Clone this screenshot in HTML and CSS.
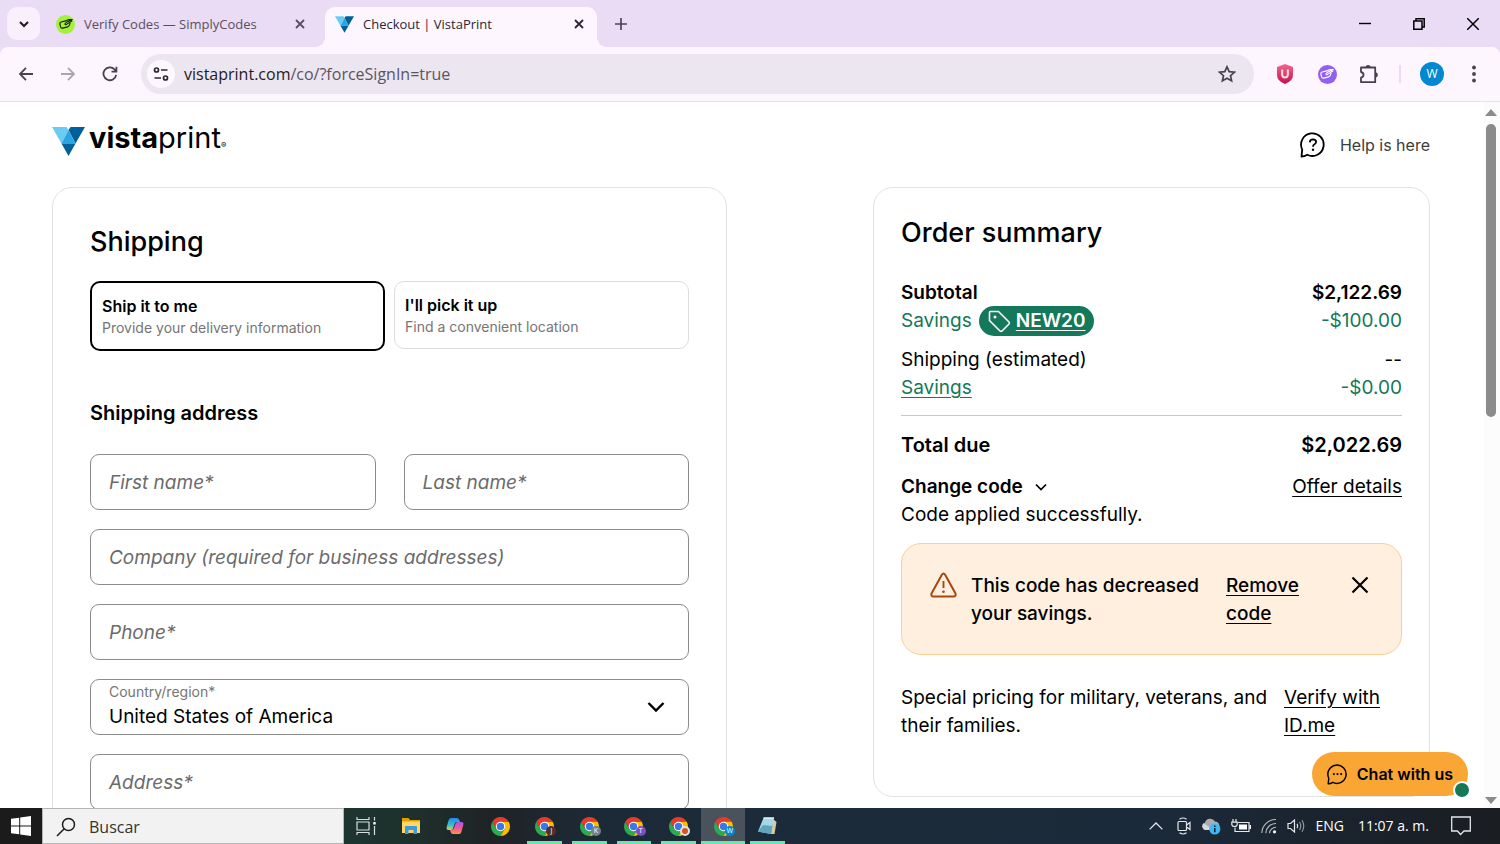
FILE: index.html
```html
<!DOCTYPE html>
<html lang="en">
<head>
    <meta charset="UTF-8">
    <meta name="viewport" content="width=device-width, initial-scale=1.0">
    <title>Checkout | VistaPrint</title>
    <link rel="stylesheet" href="styles.css">
</head>
<body>
    <!-- shared shapes -->
    <svg class="defs" aria-hidden="true">
        <symbol id="vp" viewBox="0 0 33 29">
            <path fill="#6ccbf3" d="M0 0H14.5L16.5 3L9.5 16.5Z"/>
            <path fill="#00619a" d="M18.5 0H33L23.5 16.5L16.5 3Z"/>
            <path fill="#2ba4e0" d="M16.5 3L23.5 16.5H9.5Z"/>
            <path fill="#006198" d="M9.5 16.5H23.5L16.5 29Z"/>
        </symbol>
        <symbol id="chrome" viewBox="2 2 20 20">
            <path fill="#e33b2e" d="M3.34 7A10 10 0 0 1 20.66 7H12L7.67 14.5Z"/>
            <path fill="#2da94f" d="M3.34 7L7.67 14.5L16.33 14.5L12 22A10 10 0 0 1 3.34 7Z"/>
            <path fill="#fdbd00" d="M20.66 7A10 10 0 0 1 12 22L16.33 14.5L12 7Z"/>
            <circle cx="12" cy="12" r="5" fill="#fff"/>
            <circle cx="12" cy="12" r="3.9" fill="#3b78e7"/>
        </symbol>
        <symbol id="hand" viewBox="0 0 14 14">
            <path fill="none" stroke="currentColor" stroke-width="1.1" stroke-linejoin="round" stroke-linecap="round" d="M6.800 3.900L2 5Q.6 5.400 .9 7L1.600 9.900Q2 11.400 3.600 11.100L8.600 9.900Q10 9.500 10.400 8.200L11 6.300M13.200 2.600L8 5.100Q5.300 6.700 6.200 7.600Q7 8.200 8.300 6.900L12.800 4M7.200 3.700L9.800 2.500L13.200 2.600"/>
        </symbol>
        <symbol id="bubble" viewBox="0 0 26 26">
            <path fill="none" stroke="currentColor" stroke-width="1.800" stroke-linejoin="round" d="M1.500 24.500L2.200 17.600A11.300 11.300 0 1 1 7.200 22.700Q4.500 24.400 1.500 24.500Z"/>
        </symbol>
    </svg>

    <div class="tabstrip">
        <button class="tab-search" aria-label="Search tabs">
            <svg width="12" height="12" viewBox="0 0 12 12"><path d="M2 4L6 8L10 4" fill="none" stroke="#1d1b20" stroke-width="2"/></svg>
        </button>
        <div class="tab">
            <span class="fav"><svg width="14" height="14"><use href="#hand"/></svg></span>
            <span class="tab-title">Verify Codes — SimplyCodes</span>
            <button class="tab-close" aria-label="Close tab"><svg width="10" height="10" viewBox="0 0 10 10"><path d="M1 1L9 9M9 1L1 9" stroke="currentColor" stroke-width="1.8"/></svg></button>
        </div>
        <div class="tab active">
            <svg width="19" height="17"><use href="#vp"/></svg>
            <span class="tab-title">Checkout | VistaPrint</span>
            <button class="tab-close" aria-label="Close tab"><svg width="10" height="10" viewBox="0 0 10 10"><path d="M1 1L9 9M9 1L1 9" stroke="currentColor" stroke-width="1.8"/></svg></button>
        </div>
        <button class="new-tab" aria-label="New tab"><svg width="12" height="12" viewBox="0 0 12 12"><path d="M6 0V12M0 6H12" stroke="#4e4158" stroke-width="1.700"/></svg></button>
        <div class="window-buttons">
            <button aria-label="Minimize"><svg width="12" height="12" viewBox="0 0 12 12"><path d="M0 5.500H12" stroke="#000" stroke-width="1.400"/></svg></button>
            <button aria-label="Restore"><svg width="12" height="12" viewBox="0 0 12 12"><path d="M.8 3H9V11.200H.8ZM3 3V.8H11.200V9H9" fill="none" stroke="#000" stroke-width="1.500"/></svg></button>
            <button aria-label="Close"><svg width="12" height="12" viewBox="0 0 12 12"><path d="M0 0L12 12M12 0L0 12" stroke="#000" stroke-width="1.500"/></svg></button>
        </div>
    </div>

    <div class="toolbar-wrap">
    <div class="toolbar">
        <button class="tool" aria-label="Back"><svg width="14" height="14" viewBox="0 0 14 14"><path d="M14 7H1M7 .8L.9 7L7 13.200" fill="none" stroke="#47424b" stroke-width="1.800"/></svg></button>
        <button class="tool" aria-label="Forward"><svg width="14" height="14" viewBox="0 0 14 14"><path d="M0 7H13M7 .8L13.100 7L7 13.200" fill="none" stroke="#aaa4ae" stroke-width="1.800"/></svg></button>
        <button class="tool" aria-label="Reload"><svg width="16" height="16" viewBox="0 0 16 16"><path d="M14.200 8.900A6.400 6.400 0 1 1 12.700 3.600L14.400 5.300M14.400 .8V5.700H9.500" fill="none" stroke="#47424b" stroke-width="1.800"/></svg></button>
        <div class="omnibox">
            <button class="site-info" aria-label="View site information"><svg width="16" height="14" viewBox="0 0 16 14"><g fill="none" stroke="#2c2830" stroke-width="1.700"><circle cx="3.500" cy="3" r="2"/><circle cx="12.500" cy="11" r="2"/><path d="M8 3H14.500M1.500 11H8"/></g></svg></button>
            <div class="url">vistaprint.com<span>/co/?forceSignIn=true</span></div>
            <button class="star" aria-label="Bookmark this tab"><svg width="18" height="18" viewBox="0 0 18 18"><path d="M9 1.800L11.200 6.600L16.500 7.200L12.500 10.700L13.600 15.900L9 13.200L4.400 15.900L5.500 10.700L1.500 7.200L6.800 6.600Z" fill="none" stroke="#47424b" stroke-width="1.700"/></svg></button>
        </div>
        <button class="tool" aria-label="Shield"><svg width="16" height="20" viewBox="0 0 16 20"><defs><linearGradient id="sh" x2="0" y2="1"><stop stop-color="#f5688a"/><stop offset="1" stop-color="#c40f4c"/></linearGradient></defs><path fill="url(#sh)" d="M8 0L16 3V11Q16 17 8 20Q0 17 0 11V3Z"/><path d="M5.200 5.500V10.500Q5.200 13.400 8 13.400Q10.800 13.400 10.800 10.500V5.500" fill="none" stroke="#fbe3ea" stroke-width="2"/></svg></button>
        <button class="tool" aria-label="SimplyCodes"><span class="fav purple"><svg width="14" height="14"><use href="#hand"/></svg></span></button>
        <button class="tool" aria-label="Extensions"><svg width="20" height="20" viewBox="0 0 20 20"><path d="M2 3.500H16.200V18.200H2V13.700Q4.500 13.200 4.500 10.800Q4.500 8.500 2 8Z" fill="none" stroke="#47424b" stroke-width="1.800" stroke-linejoin="round"/><path fill="#47424b" d="M6.500 3.500A2.600 2.600 0 0 1 11.700 3.500ZM16.200 8.200A2.600 2.600 0 0 1 16.200 13.400Z"/></svg></button>
        <span class="divider"></span>
        <button class="tool" aria-label="Profile"><span class="avatar">W</span></button>
        <button class="tool" aria-label="Menu"><svg width="4" height="18" viewBox="0 0 4 18"><g fill="#47424b"><circle cx="2" cy="2.500" r="1.900"/><circle cx="2" cy="9" r="1.900"/><circle cx="2" cy="15.500" r="1.900"/></g></svg></button>
    </div>
    </div>

    <div class="viewport">
        <div class="page">
            <header class="site-header">
                <a class="logo" href="#" aria-label="vistaprint home">
                    <svg width="33" height="29"><use href="#vp"/></svg>
                    <span class="wordmark"><b>vista</b>print<small>®</small></span>
                </a>
                <a class="help" href="#">
                    <span class="help-icon">
                        <svg width="26" height="26" viewBox="0 0 26 26"><use href="#bubble"/><path d="M9.800 10.400Q9.900 7.300 13 7.300Q16.100 7.400 16.100 10Q16 11.600 14.200 12.500Q13 13.200 13 14.700" fill="none" stroke="#000" stroke-width="1.800"/><circle cx="13" cy="17.700" r="1.200"/></svg>
                    </span>
                    Help is here
                </a>
            </header>

            <main class="columns">
                <section class="card shipping">
                    <h1>Shipping</h1>
                    <div class="methods">
                        <button class="method selected" aria-pressed="true">
                            <strong>Ship it to me</strong>
                            <span>Provide your delivery information</span>
                        </button>
                        <button class="method" aria-pressed="false">
                            <strong>I'll pick it up</strong>
                            <span>Find a convenient location</span>
                        </button>
                    </div>

                    <h2>Shipping address</h2>
                    <form class="address">
                        <div class="field half">
                            <input type="text" id="first">
                            <label for="first">First name*</label>
                        </div>
                        <div class="field half">
                            <input type="text" id="last">
                            <label for="last">Last name*</label>
                        </div>
                        <div class="field">
                            <input type="text" id="company">
                            <label for="company">Company (required for business addresses)</label>
                        </div>
                        <div class="field">
                            <input type="tel" id="phone">
                            <label for="phone">Phone*</label>
                        </div>
                        <div class="field country">
                            <select id="country">
                                <option>United States of America</option>
                            </select>
                            <label for="country">Country/region*</label>
                            <svg class="caret" width="18" height="12" viewBox="0 0 18 12"><path d="M1.500 2L9 9.500L16.500 2" fill="none" stroke="#000" stroke-width="2.400"/></svg>
                        </div>
                        <div class="field">
                            <input type="text" id="address">
                            <label for="address">Address*</label>
                        </div>
                    </form>
                </section>

                <aside class="card summary">
                    <h1>Order summary</h1>
                    <div class="line strong"><span>Subtotal</span><span>$2,122.69</span></div>
                    <div class="line green">
                        <span class="with-code">Savings
                            <button class="code">
                                <svg width="23" height="23" viewBox="0 0 23 23"><path d="M2.500 1.500H10.500L21 12A1.500 1.500 0 0 1 21 14L14 21A1.500 1.500 0 0 1 12 21L1.500 10.500V2.500Q1.500 1.500 2.500 1.500Z" fill="none" stroke="#fff" stroke-width="1.600" stroke-linejoin="round"/><circle cx="7" cy="7" r="1.500" fill="#fff"/></svg>
                                <span>NEW20</span>
                            </button>
                        </span>
                        <span>-$100.00</span>
                    </div>
                    <div class="line group"><span>Shipping (estimated)</span><span>--</span></div>
                    <div class="line green"><a href="#">Savings</a><span>-$0.00</span></div>
                    <hr>
                    <div class="line total"><span>Total due</span><span>$2,022.69</span></div>
                    <div class="line offer">
                        <button class="change">Change code
                            <svg width="12" height="8" viewBox="0 0 12 8"><path d="M1 1.500L6 6.500L11 1.500" fill="none" stroke="#000" stroke-width="1.700"/></svg>
                        </button>
                        <a href="#">Offer details</a>
                    </div>
                    <p class="applied">Code applied successfully.</p>

                    <div class="alert" role="alert">
                        <svg width="27" height="26" viewBox="0 0 27 26"><path d="M12 2.500Q13.500 .3 15 2.500L25.500 21.500Q26.300 24.500 23.500 24.500H3.500Q.7 24.500 1.500 21.500Z" fill="none" stroke="#a8460f" stroke-width="2" stroke-linejoin="round"/><path d="M13.500 9V16" stroke="#a8460f" stroke-width="1.900"/><circle cx="13.500" cy="19.700" r="1.300" fill="#a8460f"/></svg>
                        <p>This code has decreased your savings.</p>
                        <a href="#">Remove code</a>
                        <button aria-label="Dismiss"><svg width="18" height="18" viewBox="0 0 18 18"><path d="M1.500 1.500L16.500 16.500M16.500 1.500L1.500 16.500" stroke="#000" stroke-width="2.200"/></svg></button>
                    </div>

                    <div class="idme">
                        <p>Special pricing for military, veterans, and their families.</p>
                        <a href="#">Verify with ID.me</a>
                    </div>
                </aside>
            </main>
        </div>

        <div class="scrollbar">
            <svg width="12" height="7" viewBox="0 0 12 7"><path d="M0 7L6 0L12 7Z" fill="#8b8b8b"/></svg>
            <div class="track"><div class="thumb"></div></div>
            <svg width="12" height="7" viewBox="0 0 12 7"><path d="M0 0L6 7L12 0Z" fill="#8b8b8b"/></svg>
        </div>

        <button class="chat">
            <svg width="21" height="21" viewBox="0 0 26 26"><use href="#bubble"/><g fill="#000"><circle cx="8.500" cy="12.500" r="1.300"/><circle cx="13" cy="12.500" r="1.300"/><circle cx="17.500" cy="12.500" r="1.300"/></g></svg>
            Chat with us
            <span class="online"></span>
        </button>
    </div>

    <footer class="taskbar">
        <button class="start" aria-label="Start"><svg width="20" height="20" viewBox="0 0 20 20"><path fill="#fff" d="M0 2.800L8.200 1.700V9.500H0ZM9.200 1.500L20 0V9.500H9.200ZM0 10.500H8.200V18.300L0 17.200ZM9.200 10.500H20V20L9.200 18.500Z"/></svg></button>
        <label class="search">
            <svg width="20" height="20" viewBox="0 0 20 20"><circle cx="12.500" cy="7.500" r="6" fill="none" stroke="#1a1a1a" stroke-width="1.500"/><path d="M8.200 11.800L1 19" stroke="#1a1a1a" stroke-width="1.500"/></svg>
            <input type="text" placeholder="Buscar" aria-label="Buscar">
        </label>
        <div class="apps">
            <button aria-label="Task view"><svg width="20" height="18" viewBox="0 0 20 18"><g fill="none" stroke="#d9dedd" stroke-width="1.200"><path d="M1 0V2.500H13V0M1 18V15.500H13V18M1 5H13V13H1ZM18.500 0V3.500M18.500 9V18"/></g><path fill="#fff" d="M17.300 5H19.700V7.500H17.300Z"/></svg></button>
            <button aria-label="File Explorer"><svg width="18" height="16" viewBox="0 0 18 16"><path fill="#e0a000" d="M0 0H6.500L8 2H18V6H0Z"/><path fill="#ffd765" d="M0 3.500H18V15H0Z"/><path fill="#3f9bdc" d="M3 9Q3 8 4 8H14Q15 8 15 9V16H11.500V12H6.500V16H3Z"/></svg></button>
            <button aria-label="Copilot"><svg width="18" height="18" viewBox="0 0 18 18"><defs><linearGradient id="c1" x2="0" y2="1"><stop stop-color="#2a86f0"/><stop offset=".6" stop-color="#35c2c8"/><stop offset="1" stop-color="#d8d34a"/></linearGradient><linearGradient id="c2" x2="0" y2="1"><stop stop-color="#a45af0"/><stop offset=".5" stop-color="#f0569a"/><stop offset="1" stop-color="#fa9550"/></linearGradient></defs><path fill="url(#c1)" d="M5 1H11Q13 1 13.500 3.500L14 5H11Q9 5 8.500 7L7 11.500Q6.500 13 4.500 13H2.500Q0 13 .7 10L2.500 3.500Q3 1 5 1Z"/><path fill="url(#c2)" d="M13 17H7Q5 17 4.500 14.500L4 13Q7 13.500 8 11L9.500 6.500Q10 5 12 5H15.500Q18 5 17.300 8L15.500 14.500Q15 17 13 17Z"/></svg></button>
            <button aria-label="Chrome"><svg class="chrome"><use href="#chrome"/></svg></button>
            <button class="open" aria-label="Chrome J"><svg class="chrome"><use href="#chrome"/></svg><span class="badge brown">J</span></button>
            <button class="open" aria-label="Chrome K"><svg class="chrome"><use href="#chrome"/></svg><span class="badge grey">K</span></button>
            <button class="open" aria-label="Chrome T"><svg class="chrome"><use href="#chrome"/></svg><span class="badge violet">T</span></button>
            <button class="open" aria-label="Chrome guest"><svg class="chrome"><use href="#chrome"/></svg><span class="badge orange"></span></button>
            <button class="open current" aria-label="Chrome W"><svg class="chrome"><use href="#chrome"/></svg><span class="badge blue">W</span></button>
            <button class="open" aria-label="Notepad"><svg width="19" height="18" viewBox="0 0 19 18"><path fill="#d8c9a0" d="M15 2L18.500 5L16.500 17L13 17Z"/><path fill="#a5d8e6" d="M5.500 1H16L13 17L0 14.500Z"/><path fill="#5fa6bd" d="M5 8L14.500 9L13 17L0 14.500Z"/><path stroke="#e8f5f8" stroke-width="1.500" d="M5.500 1H16"/></svg></button>
        </div>
        <div class="tray">
            <svg class="more" width="14" height="8" viewBox="0 0 14 8"><path d="M.6 7.400L7 1L13.400 7.400" fill="none" stroke="#e4e7ea" stroke-width="1.300"/></svg>
            <svg width="14" height="18" viewBox="0 0 14 18"><g fill="none" stroke="#e4e7ea" stroke-width="1.200"><path d="M2.500 2.200Q6 -.2 9.500 2.200M2.500 15.800Q6 18.200 9.500 15.800"/><rect x="1" y="4.500" width="8.500" height="9" rx="1"/><path d="M9.500 8L13 5.500V12.500L9.500 10"/></g></svg>
            <svg width="20" height="18" viewBox="0 0 20 18"><path fill="#a9adb2" d="M4 13A4 4 0 0 1 4 5.500A5.500 5.500 0 0 1 14 4.500A4.500 4.500 0 0 1 16 13Z"/><path fill="#d5d8db" d="M4 13A4 4 0 0 1 2.500 6.300L13 13Z"/><circle cx="13.800" cy="12" r="5.600" fill="#3fb8f2"/><path d="M13.800 11V15.300M13.800 8.500V10" stroke="#0c2a44" stroke-width="1.600"/></svg>
            <svg width="20" height="14" viewBox="0 0 20 14"><g fill="none" stroke="#e4e7ea" stroke-width="1.200"><path d="M7 3.500H18V12.500H4V8.500M2 0V3M5 0V3M.8 3.200H6.200V5.500Q6 7.500 3.500 7.500Q1 7.500 .8 5.500Z"/></g><path fill="#fff" d="M8 5.500H16V10.500H8ZM18.500 6H20V10H18.500Z"/></svg>
            <svg width="16" height="16" viewBox="0 0 16 16"><g fill="none" stroke="#b9bec4" stroke-width="1.100"><path d="M.8 15A14 14 0 0 1 15 1.500M4.800 15.200A10 10 0 0 1 15 5.500M8.500 15.200A6.500 6.500 0 0 1 15 9.200"/></g><circle cx="13.500" cy="13.800" r="1.600" fill="#fff"/></svg>
            <svg width="18" height="14" viewBox="0 0 18 14"><g fill="none" stroke="#e4e7ea" stroke-width="1.200"><path d="M1 4.500H3.500L7.500 1V13L3.500 9.500H1Z"/><path d="M10 4.800Q11.500 7 10 9.200"/><path stroke="#8d959d" d="M12.500 3Q15 7 12.500 11M15 1.300Q18.500 7 15 12.700"/></g></svg>
            <span>ENG</span>
            <time>11:07 a. m.</time>
            <svg width="20" height="20" viewBox="0 0 20 20"><path d="M.7 1H19.300V15H13L9.500 18.500L6.500 15H.7Z" fill="none" stroke="#e4e7ea" stroke-width="1.300"/></svg>
        </div>
    </footer>
</body>
</html>
```

FILE: styles.css
```css
* {
    box-sizing: border-box;
}

body {
    margin: 0;
    height: 100vh;
    display: flex;
    flex-direction: column;
    overflow: hidden;
    background: #fff;
    color: #000;
    font-family: Inter, "Liberation Sans", sans-serif;
    font-size: 19px;
    line-height: 28px;
}

button, input, select {
    font: inherit;
    color: inherit;
    border: 0;
    padding: 0;
    background: none;
}

svg {
    display: block;
    flex: none;
}

h1, h2, p {
    margin: 0;
}

.defs {
    position: absolute;
    width: 0;
    height: 0;
}

/* browser tabs */
.tabstrip {
    display: flex;
    height: 47px;
    flex: none;
    padding-left: 7px;
    background: #eadcf5;
    font: 13px/20px "Open Sans", "Noto Sans", sans-serif;
}

.tab-search {
    width: 33px;
    height: 33px;
    margin-top: 7px;
    border-radius: 10px;
    background: #f9effd;
    display: grid;
    place-items: center;
}

.tab {
    display: flex;
    align-items: center;
    gap: 9px;
    width: 273px;
    height: 40px;
    margin-top: 7px;
    padding: 0 8px 6px 16px;
    color: #594f60;
}

.tab.active {
    position: relative;
    width: 272px;
    margin-left: 12px;
    padding: 0 13px 6px 10px;
    border-radius: 10px 10px 0 0;
    background: #fdf6fe;
    color: #2b2730;
}

/* flared feet of the active tab */
.tab.active::before, .tab.active::after {
    content: "";
    position: absolute;
    bottom: 0;
    width: 10px;
    height: 10px;
}

.tab.active::before {
    right: 100%;
    background: radial-gradient(circle at 0 0, transparent 10px, #fdf6fe 10px);
}

.tab.active::after {
    left: 100%;
    background: radial-gradient(circle at 100% 0, transparent 10px, #fdf6fe 10px);
}

.tab-title {
    flex: 1;
    white-space: nowrap;
}

.fav {
    width: 19px;
    height: 19px;
    border-radius: 50%;
    background: #a6f03c;
    color: #15200a;
    display: grid;
    place-items: center;
}

.fav.purple {
    background: #925ff0;
    color: #fff;
}

.new-tab {
    width: 48px;
    display: grid;
    place-items: center;
}

.window-buttons {
    display: flex;
    margin-left: auto;
}

.window-buttons button {
    width: 54px;
    display: grid;
    place-items: center;
}

/* address bar */
.toolbar-wrap {
    flex: none;
    background: #eadcf5;
}

.toolbar {
    display: flex;
    align-items: center;
    height: 55px;
    padding: 0 5px;
    border-bottom: 1px solid #ecdfee;
    border-radius: 8px 8px 0 0;
    background: #fdf6fe;
    font-family: "Open Sans", "Noto Sans", sans-serif;
}

.tool {
    width: 42px;
    height: 40px;
    display: grid;
    place-items: center;
}

.omnibox {
    flex: 1;
    display: flex;
    align-items: center;
    height: 40px;
    margin: 0 10px;
    padding: 0 18px 0 6px;
    border-radius: 20px;
    background: #ece6f0;
}

.site-info {
    width: 28px;
    height: 28px;
    border-radius: 50%;
    background: #fdf8ff;
    display: grid;
    place-items: center;
}

.url {
    flex: 1;
    margin-left: 9px;
    font-size: 16px;
    color: #1f1b24;
}

.url span {
    color: #5a5560;
}

.divider {
    width: 2px;
    height: 18px;
    margin: 0 10px 0 9px;
    background: #eadcf8;
}

.avatar {
    width: 24px;
    height: 24px;
    border-radius: 50%;
    background: #0288d1;
    color: #fff;
    font-size: 12px;
    line-height: 24px;
    text-align: center;
}

/* checkout page */
.viewport {
    flex: 1;
    min-height: 0;
    display: flex;
    position: relative;
}

.page {
    flex: 1;
    overflow: hidden;
    padding: 0 54px 0 52px;
}

.site-header {
    display: flex;
    justify-content: space-between;
    align-items: center;
    height: 85px;
}

.logo {
    display: flex;
    align-items: center;
    gap: 4px;
    padding-bottom: 6px;
    color: #000;
    text-decoration: none;
}

.wordmark {
    font-size: 29px;
    line-height: 32px;
}

.wordmark small {
    font-size: 8px;
}

.help {
    display: flex;
    align-items: center;
    gap: 14px;
    font-size: 16px;
    color: #3c3c3c;
    text-decoration: none;
}

.help-icon {
    color: #000;
}

.columns {
    display: grid;
    grid-template-columns: 675fr 557fr;
    column-gap: 146px;
    align-items: start;
}

.card {
    border: 1px solid #e2e2e2;
    border-radius: 20px;
}

.card h1 {
    font-size: 27px;
    line-height: 36px;
    font-weight: 500;
}

.shipping {
    padding: 36px 37px;
}

.methods {
    display: grid;
    grid-template-columns: 1fr 1fr;
    gap: 9px;
    align-items: start;
    margin-top: 21px;
}

.method {
    padding: 12px 10px 10px;
    border: 1px solid #ddd;
    border-radius: 10px;
    text-align: left;
    line-height: 22px;
}

.method.selected {
    border: 2px solid #000;
}

.method strong {
    display: block;
    font-size: 16px;
    font-weight: 600;
}

.method span {
    display: block;
    font-size: 14px;
    color: #757575;
}

.shipping h2 {
    margin: 48px 0 27px;
    font-size: 20px;
    line-height: 28px;
    font-weight: 600;
}

.address {
    display: grid;
    grid-template-columns: 1fr 1fr;
    gap: 19px 28px;
}

.field {
    display: grid;
    grid-column: span 2;
    height: 56px;
}

.field.half {
    grid-column: span 1;
}

/* label and control share one cell so the label sits inside the box */
.field > * {
    grid-area: 1 / 1;
}

.field input, .field select {
    width: 100%;
    padding: 0 18px;
    border: 1px solid #8c8c8c;
    border-radius: 9px;
}

.field label {
    align-self: center;
    padding: 2px 0 0 19px;
    font-style: italic;
    color: #6b6b6b;
    pointer-events: none;
}

.field.country select {
    appearance: none;
    padding-top: 20px;
}

.field.country label {
    align-self: start;
    padding-top: 0;
    font-size: 14px;
    font-style: normal;
    line-height: 26px;
    color: #757575;
}

.caret {
    place-self: center end;
    margin-right: 24px;
    pointer-events: none;
}

.summary {
    padding: 27px 27px 56px;
}

.summary h1 {
    margin-bottom: 28px;
}

.summary a {
    color: #000;
    text-underline-offset: 3px;
}

.line {
    display: flex;
    justify-content: space-between;
    height: 28px;
    align-items: center;
}

.line.strong {
    font-weight: 600;
}

.line.green, .line.green a {
    color: #14785a;
}

.line.group {
    margin-top: 11px;
}

.with-code {
    display: flex;
    align-items: center;
    gap: 7px;
}

.code {
    display: flex;
    align-items: center;
    gap: 5px;
    height: 30px;
    padding: 0 9px;
    border-radius: 15px;
    background: #14785a;
    color: #fff;
    font-weight: 600;
    text-decoration: underline;
    text-underline-offset: 3px;
}

hr {
    width: 100%;
    margin: 13px 0 15px;
    border: 0;
    border-top: 1px solid #c8c8c8;
}

.line.total {
    font-size: 20px;
    font-weight: 600;
}

.line.offer {
    margin-top: 14px;
}

.change {
    display: flex;
    align-items: center;
    gap: 12px;
    font-weight: 600;
}

.alert {
    display: grid;
    grid-template-columns: 27px 241px 90px 1fr;
    column-gap: 14px;
    margin-top: 14px;
    padding: 28px 32px 26px 28px;
    border: 1px solid #fdcf98;
    border-radius: 20px;
    background: #feefdf;
    font-weight: 500;
}

.alert button {
    justify-self: end;
    align-self: start;
    padding-top: 4px;
}

.idme {
    display: grid;
    grid-template-columns: 1fr 118px;
    gap: 10px;
    margin-top: 29px;
}

.scrollbar {
    width: 16px;
    display: flex;
    flex-direction: column;
    align-items: center;
    padding: 7px 2px 4px 0;
    background: #fcfcfc;
}

.track {
    flex: 1;
    width: 10px;
    padding: 8px 0;
}

.thumb {
    height: 44%;
    border-radius: 5px;
    background: #8b8b8b;
}

.chat {
    position: absolute;
    right: 32px;
    bottom: 12px;
    display: flex;
    align-items: center;
    gap: 9px;
    height: 44px;
    padding: 0 15px;
    border-radius: 22px;
    background: #faa634;
    font-size: 16px;
    font-weight: 600;
}

.online {
    position: absolute;
    right: -3px;
    bottom: -3px;
    width: 18px;
    height: 18px;
    border: 2px solid #fff;
    border-radius: 50%;
    background: #14785a;
}

/* windows taskbar */
.taskbar {
    flex: none;
    display: flex;
    height: 36px;
    background: linear-gradient(90deg, #1b1b1b 0, #1b1b1b 300px, #1d3530 344px, #1e2f2c 420px, #1f2325 490px, #1c2a38 600px, #1b2a3a 1150px, #1a1d22 1500px);
    color: #fff;
    font: 14px/20px "Open Sans", "Noto Sans", sans-serif;
    border-right: 5px solid #1a1d22;
}

.start {
    width: 42px;
    display: grid;
    place-items: center;
}

.search {
    display: flex;
    align-items: center;
    gap: 13px;
    width: 302px;
    padding: 2px 12px 0 13px;
    border: 1px solid #b5b5b5;
    background: #f2f2f2;
}

.search input {
    flex: 1;
    min-width: 0;
    font-size: 16px;
}

.search input::placeholder {
    color: #333;
    opacity: 1;
}

.apps {
    display: grid;
    grid-template-columns: repeat(10, 1fr);
    width: 446px;
}

.apps button {
    display: grid;
    place-items: center;
    position: relative;
}

.apps .current {
    background: #4a525b;
}

.apps .open::after {
    content: "";
    position: absolute;
    bottom: 0;
    left: 5px;
    right: 5px;
    height: 3px;
    background: #6fe3ae;
}

.apps .current::after {
    left: 0;
    right: 0;
}

.chrome {
    width: 19px;
    height: 19px;
}

.badge {
    position: absolute;
    left: 24px;
    top: 18px;
    width: 10px;
    height: 10px;
    border-radius: 50%;
    font-size: 7px;
    line-height: 10px;
    text-align: center;
}

.brown { background: #50302a; }
.grey { background: #73838c; }
.violet { background: #7a4fc4; }
.orange { background: #d8521c; border: 2px solid #dfe3e6; }
.blue { background: #0288d1; }

.tray {
    display: flex;
    align-items: center;
    gap: 10px;
    margin-left: auto;
    padding-right: 24px;
}

.tray .more {
    margin-right: 4px;
}

.tray time {
    margin: 0 12px 0 4px;
}
```
